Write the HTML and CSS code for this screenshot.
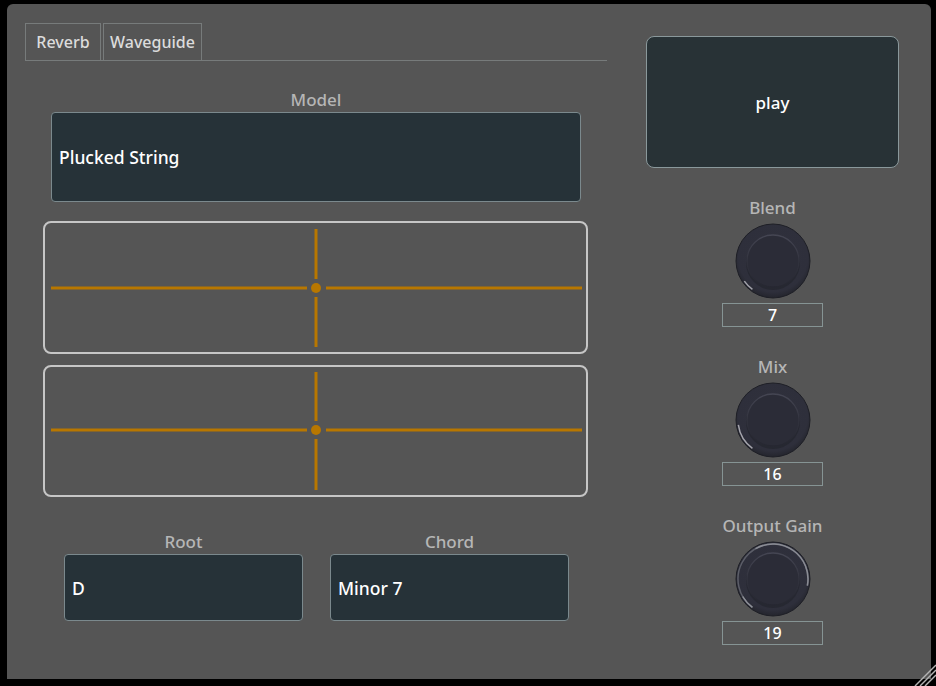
FILE: index.html
```html
<!DOCTYPE html>
<html>
<head>
<meta charset="utf-8">
<link rel="stylesheet" href="styles.css">
</head>
<body>
<div class="window">
  <div class="panel">
    <div class="left">
      <div class="tabbar">
        <div class="tab tab-reverb">Reverb</div>
        <div class="tab tab-waveguide">Waveguide</div>
      </div>
      <div class="field model-field">
        <div class="label label-model">Model</div>
        <div class="combo combo-model">Plucked String</div>
      </div>
      <div class="xy xy-1">
        <svg width="541" height="129" viewBox="0 0 541 129">
          <g stroke="#b87700" stroke-width="3" fill="none">
            <line x1="6" y1="65" x2="262" y2="65"/>
            <line x1="281" y1="65" x2="537" y2="65"/>
            <line x1="271" y1="6" x2="271" y2="56"/>
            <line x1="271" y1="74" x2="271" y2="124"/>
          </g>
          <circle cx="271" cy="65" r="5" fill="#b87700"/>
        </svg>
      </div>
      <div class="xy xy-2">
        <svg width="541" height="128" viewBox="0 0 541 128">
          <g stroke="#b87700" stroke-width="3" fill="none">
            <line x1="6" y1="63" x2="262" y2="63"/>
            <line x1="281" y1="63" x2="537" y2="63"/>
            <line x1="271" y1="5" x2="271" y2="54"/>
            <line x1="271" y1="72" x2="271" y2="123"/>
          </g>
          <circle cx="271" cy="63" r="5" fill="#b87700"/>
        </svg>
      </div>
      <div class="row-bottom">
        <div class="field small-field">
          <div class="label">Root</div>
          <div class="combo combo-small">D</div>
        </div>
        <div class="field small-field">
          <div class="label">Chord</div>
          <div class="combo combo-small">Minor 7</div>
        </div>
      </div>
    </div>
    <div class="right">
      <div class="play">play</div>
      <div class="knob-group">
        <div class="label label-knob">Blend</div>
        <svg class="knob" width="76" height="76" viewBox="0 0 76 76">
          <defs>
            <radialGradient id="ko" cx="50%" cy="45%" r="55%">
              <stop offset="0%" stop-color="#30313c"/>
              <stop offset="85%" stop-color="#2e2f3b"/>
              <stop offset="100%" stop-color="#24252d"/>
            </radialGradient>
            <linearGradient id="kr" x1="0" y1="0" x2="0" y2="1">
              <stop offset="0%" stop-color="#454653"/>
              <stop offset="60%" stop-color="#2f303b"/>
              <stop offset="100%" stop-color="#262731"/>
            </linearGradient>
          </defs>
          <circle cx="38" cy="38" r="37" fill="url(#ko)" stroke="#1e1f26" stroke-width="1"/>
          <circle cx="38" cy="40" r="27" fill="#24252d" opacity="0.7"/>
          <circle cx="38" cy="38" r="26" fill="#2b2c37" stroke="url(#kr)" stroke-width="1.3"/>
          <path d="M17.43 66.32 A35 35 0 0 1 9.33 58.08" stroke="#a4a4ac" stroke-width="1.5" fill="none"/>
        </svg>
        <div class="value">7</div>
      </div>
      <div class="knob-group">
        <div class="label label-knob">Mix</div>
        <svg class="knob" width="76" height="76" viewBox="0 0 76 76">
          <circle cx="38" cy="38" r="37" fill="url(#ko)" stroke="#1e1f26" stroke-width="1"/>
          <circle cx="38" cy="40" r="27" fill="#24252d" opacity="0.7"/>
          <circle cx="38" cy="38" r="26" fill="#2b2c37" stroke="url(#kr)" stroke-width="1.3"/>
          <path d="M17.43 66.32 A35 35 0 0 1 3.34 42.87" stroke="#a4a4ac" stroke-width="1.5" fill="none"/>
        </svg>
        <div class="value">16</div>
      </div>
      <div class="knob-group">
        <div class="label label-knob">Output Gain</div>
        <svg class="knob" width="76" height="76" viewBox="0 0 76 76">
          <circle cx="38" cy="38" r="37" fill="url(#ko)" stroke="#1e1f26" stroke-width="1"/>
          <circle cx="38" cy="40" r="27" fill="#24252d" opacity="0.7"/>
          <circle cx="38" cy="38" r="26" fill="#2b2c37" stroke="url(#kr)" stroke-width="1.3"/>
          <path d="M17.43 66.32 A35 35 0 1 1 72.36 44.68" stroke="#5c5e68" stroke-width="1.5" fill="none"/>
          <path d="M17.43 66.32 A35 35 0 0 1 7.69 55.5" stroke="#8e9098" stroke-width="1.5" fill="none"/>
          <path d="M20.5 7.69 A35 35 0 0 1 72.36 44.68" stroke="#8a8c94" stroke-width="1.5" fill="none"/>
        </svg>
        <div class="value">19</div>
      </div>
    </div>
  </div>
  <svg class="grip" width="22" height="24" viewBox="0 0 22 24">
    <g stroke="#b4b4b4" stroke-width="1.4">
      <line x1="1" y1="24" x2="22" y2="3"/>
      <line x1="6" y1="24" x2="22" y2="8"/>
      <line x1="11" y1="24" x2="22" y2="13"/>
    </g>
  </svg>
</div>
</body>
</html>
```

FILE: styles.css
```css
html, body {
  margin: 0;
  padding: 0;
  background: #000;
}

.window {
  position: relative;
  width: 936px;
  height: 686px;
  overflow: hidden;
  background: #000;
  font-family: "Noto Sans", "DejaVu Sans", sans-serif;
  font-weight: 500;
}

.panel {
  display: flex;
  box-sizing: border-box;
  margin: 4px 0 0 7px;
  width: 924px;
  height: 675px;
  padding: 19px 32px 0 18px;
  background: #555555;
  border-radius: 6px 6px 0 0;
}

.left {
  width: 582px;
  display: flex;
  flex-direction: column;
}

.tabbar {
  display: flex;
  gap: 2px;
  height: 37px;
  border-bottom: 1px solid #777b7b;
}

.tab {
  box-sizing: border-box;
  height: 37px;
  border: 1px solid #777b7b;
  border-bottom: none;
  display: flex;
  align-items: center;
  justify-content: center;
  color: #dcdcdc;
  font-size: 16px;
}

.tab-reverb { width: 76px; }
.tab-waveguide { width: 99px; }

.field {
  display: flex;
  flex-direction: column;
}

.label {
  box-sizing: border-box;
  height: 20px;
  line-height: 20px;
  text-align: center;
  color: #b6b6b6;
  font-size: 17px;
}

.label-model {
  padding-top: 1px;
}

.label-knob {
  padding-top: 2px;
}

.model-field {
  margin-top: 28px;
  margin-left: 26px;
  width: 530px;
}

.combo {
  box-sizing: border-box;
  margin-top: 3px;
  display: flex;
  align-items: center;
  padding-left: 7px;
  background: #263238;
  border: 1px solid #7b898d;
  border-radius: 4px;
  color: #ffffff;
  font-size: 17.5px;
}

.combo-model {
  height: 90px;
}

.xy {
  box-sizing: border-box;
  margin-left: 18px;
  width: 545px;
  border: 2px solid #c6c6c6;
  border-radius: 8px;
}

.xy svg {
  display: block;
}

.xy-1 {
  margin-top: 19px;
  height: 133px;
}

.xy-2 {
  margin-top: 11px;
  height: 132px;
}

.row-bottom {
  display: flex;
  gap: 27px;
  margin-top: 35px;
  margin-left: 39px;
}

.small-field {
  width: 239px;
}

.combo-small {
  margin-top: 2px;
  height: 67px;
}

.right {
  width: 253px;
  margin-left: 39px;
  padding-top: 13px;
  display: flex;
  flex-direction: column;
}

.play {
  box-sizing: border-box;
  height: 132px;
  display: flex;
  align-items: center;
  justify-content: center;
  background: #283236;
  border: 1px solid #8a989b;
  border-radius: 8px;
  color: #ffffff;
  font-size: 17px;
}

.knob-group {
  margin-top: 28px;
  display: flex;
  flex-direction: column;
  align-items: center;
}

.knob {
  display: block;
  margin-top: 7px;
}

.value {
  box-sizing: border-box;
  margin-top: 4px;
  width: 101px;
  height: 24px;
  line-height: 22px;
  border: 1px solid #869494;
  text-align: center;
  color: #ffffff;
  font-size: 16px;
}

.grip {
  position: absolute;
  right: 0;
  bottom: 0;
}
```
